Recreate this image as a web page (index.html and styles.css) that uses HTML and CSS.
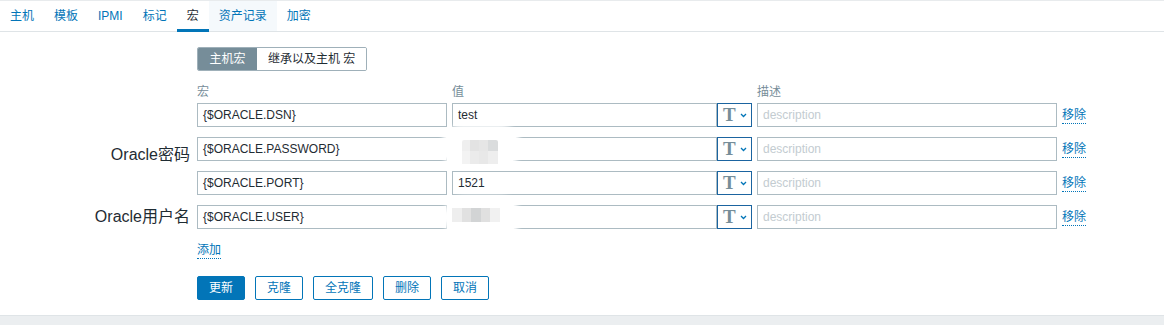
FILE: index.html
```html
<!DOCTYPE html>
<html lang="zh-CN">
<head>
<meta charset="utf-8">
<link rel="stylesheet" href="styles.css">
</head>
<body>
<div class="page">
  <ul class="tabs">
    <li class="tab">主机</li>
    <li class="tab">模板</li>
    <li class="tab">IPMI</li>
    <li class="tab">标记</li>
    <li class="tab active">宏</li>
    <li class="tab hover">资产记录</li>
    <li class="tab">加密</li>
  </ul>
  <div class="content">
    <div class="row seg-row">
      <div class="lbl"></div>
      <div class="seg">
        <span class="seg-btn on">主机宏</span>
        <span class="seg-btn">继承以及主机 宏</span>
      </div>
    </div>
    <div class="row head-row">
      <div class="lbl"></div>
      <div class="c-macro">宏</div>
      <div class="c-value">值</div>
      <div class="c-desc">描述</div>
    </div>
    <div class="rows">
      <div class="row mrow">
        <div class="lbl"></div>
        <div class="field c-macro">{$ORACLE.DSN}</div>
        <div class="c-value vgroup">
          <div class="field vfield">test</div>
          <div class="tbtn"><span class="t">T</span><svg width="7" height="5" viewBox="0 0 7 5"><path d="M1 1 L3.5 3.5 L6 1" fill="none" stroke="#0275b8" stroke-width="1.3"/></svg></div>
        </div>
        <div class="field c-desc ph">description</div>
        <span class="link">移除</span>
      </div>
      <div class="row mrow">
        <div class="lbl low">Oracle密码</div>
        <div class="field c-macro">{$ORACLE.PASSWORD}</div>
        <div class="c-value vgroup">
          <div class="field vfield"></div>
          <div class="tbtn"><span class="t">T</span><svg width="7" height="5" viewBox="0 0 7 5"><path d="M1 1 L3.5 3.5 L6 1" fill="none" stroke="#0275b8" stroke-width="1.3"/></svg></div>
          <div class="blob b1"><div class="px px1"></div></div>
        </div>
        <div class="field c-desc ph">description</div>
        <span class="link">移除</span>
      </div>
      <div class="row mrow">
        <div class="lbl"></div>
        <div class="field c-macro">{$ORACLE.PORT}</div>
        <div class="c-value vgroup">
          <div class="field vfield">1521</div>
          <div class="tbtn"><span class="t">T</span><svg width="7" height="5" viewBox="0 0 7 5"><path d="M1 1 L3.5 3.5 L6 1" fill="none" stroke="#0275b8" stroke-width="1.3"/></svg></div>
        </div>
        <div class="field c-desc ph">description</div>
        <span class="link">移除</span>
      </div>
      <div class="row mrow">
        <div class="lbl">Oracle用户名</div>
        <div class="field c-macro">{$ORACLE.USER}</div>
        <div class="c-value vgroup">
          <div class="field vfield"></div>
          <div class="tbtn"><span class="t">T</span><svg width="7" height="5" viewBox="0 0 7 5"><path d="M1 1 L3.5 3.5 L6 1" fill="none" stroke="#0275b8" stroke-width="1.3"/></svg></div>
          <div class="blob b2"><div class="px px2"></div></div>
        </div>
        <div class="field c-desc ph">description</div>
        <span class="link">移除</span>
      </div>
    </div>
    <div class="row add-row">
      <div class="lbl"></div>
      <span class="link">添加</span>
    </div>
    <div class="row btn-row">
      <div class="lbl"></div>
      <div class="btns">
        <span class="btn primary">更新</span>
        <span class="btn">克隆</span>
        <span class="btn">全克隆</span>
        <span class="btn">删除</span>
        <span class="btn">取消</span>
      </div>
    </div>
  </div>
</div>
</body>
</html>
```
FILE: styles.css
```css
* { box-sizing: border-box; }
html, body { margin: 0; padding: 0; }
body {
  background: #ebeef0;
  font-family: "Liberation Sans", "Noto Sans CJK SC", sans-serif;
  font-size: 12px;
  color: #1f2c33;
}
.page {
  background: #fff;
  border-bottom: 1px solid #dfe4e7;
}
.tabs {
  list-style: none;
  margin: 0;
  padding: 0;
  display: flex;
  height: 32px;
  border-top: 1px solid #e8ebed;
  border-bottom: 1px solid #dfe4e7;
}
.tab {
  padding: 0 10px;
  height: 31px;
  line-height: 30px;
  color: #0275b8;
  margin-bottom: -1px;
}
.tab.active {
  color: #1f2c33;
  box-shadow: inset 0 -3px 0 #0275b8;
}
.tab.hover { background: #f5f9fc; height: 30px; }
.content { padding: 15px 0 15px 0; }
.row { display: flex; align-items: center; }
.lbl {
  width: 190px;
  margin-right: 7px;
  text-align: right;
  font-size: 16px;
  line-height: 18px;
  flex: none;
}
.lbl.low { align-self: flex-start; margin-top: 9px; }
.seg {
  display: flex;
  height: 24px;
  border: 1px solid #9fb0b9;
  border-radius: 2px;
  overflow: hidden;
}
.seg-btn {
  padding: 0 11px;
  line-height: 22px;
  background: #fff;
  color: #1f2c33;
}
.seg-btn.on {
  background: #768d99;
  color: #fff;
  padding: 0 11px;
  width: 59px;
  text-align: center;
}
.head-row {
  margin-top: 10px;
  margin-bottom: 4px;
  height: 18px;
  color: #768d99;
}
.c-macro { width: 250px; flex: none; margin-right: 5px; }
.c-value { width: 300px; flex: none; margin-right: 5px; }
.c-desc { width: 300px; flex: none; margin-right: 5px; }
.rows { display: flex; flex-direction: column; gap: 10px; }
.mrow { height: 24px; }
.field {
  height: 24px;
  border: 1px solid #acbbc2;
  padding: 0 5px;
  line-height: 22px;
  background: #fff;
  color: #1f2c33;
  white-space: nowrap;
  overflow: hidden;
}
.field.ph { color: #c3ccd1; }
.vgroup { display: flex; position: relative; height: 24px; }
.vfield { width: 265px; flex: none; }
.tbtn {
  width: 35px;
  height: 24px;
  border: 1px solid #1b64a0;
  display: flex;
  align-items: center;
  padding-left: 5px;
  gap: 4px;
  flex: none;
}
.tbtn .t {
  font-family: "Liberation Serif", serif;
  font-weight: bold;
  font-size: 19px;
  line-height: 20px;
  color: #768d99;
}
.tbtn svg { margin-top: 1px; }
.link {
  color: #0275b8;
  line-height: 15px;
  border-bottom: 1px dotted #0275b8;
  white-space: nowrap;
}
.mrow .link { margin-top: 1px; }
.blob {
  position: absolute;
  background: #fff;
  border-radius: 18px;
  box-shadow: 0 0 4px 3px #fff;
}
.b1 { left: -8px; top: -9px; width: 74px; height: 38px; }
.b2 { left: -6px; top: -6px; width: 72px; height: 36px; }
.px { position: absolute; filter: blur(0.6px); }
.px1 {
  left: 18px; top: 12px; width: 36px; height: 24px;
  background:
    linear-gradient(90deg, #efefef 0 8px, #e3e3e3 8px 17px, #e6e6e6 17px 26px, #dadcdd 26px 36px);
  border-radius: 2px;
}
.b1 .px1::after {
  content: "";
  position: absolute;
  left: 0; top: 11px; width: 36px; height: 13px;
  background: linear-gradient(90deg, #f3f3f3 0 8px, #ebebeb 8px 17px, #e8e8e8 17px 26px, #eeeeee 26px 36px);
}
.px2 {
  left: 6px; top: 9px; width: 48px; height: 14px;
  background:
    linear-gradient(90deg, #eeeeee 0 10px, #e1e1e1 10px 19px, #d2d4d5 19px 29px, #e0e0e0 29px 38px, #f1f1f1 38px 48px);
}
.add-row { margin-top: 13px; height: 17px; align-items: flex-start; }
.add-row .link { line-height: 16px; }
.btn-row { margin-top: 17px; }
.btns { display: flex; gap: 10px; }
.btn {
  height: 24px;
  line-height: 22px;
  padding: 0 11px;
  border: 1px solid #0275b8;
  border-radius: 2px;
  color: #0275b8;
  background: #fff;
  white-space: nowrap;
}
.btn.primary { background: #0275b8; color: #fff; }
```
